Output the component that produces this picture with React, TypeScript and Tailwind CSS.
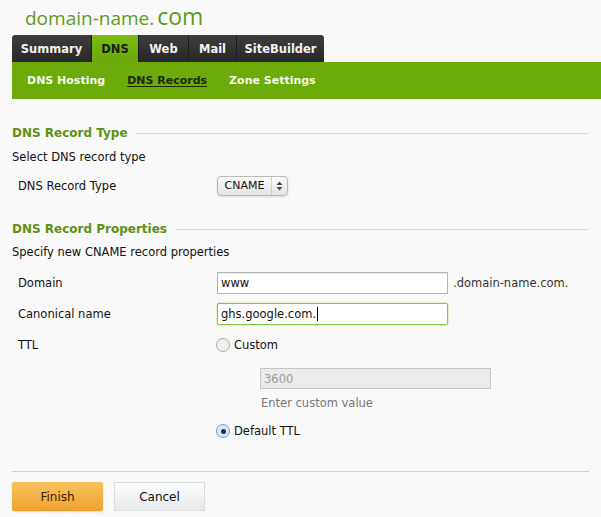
import { useState } from "react";

const tabs = [
  { label: "Summary", w: "w-[79px]" },
  { label: "DNS", w: "w-[46px]" },
  { label: "Web", w: "w-[49px]" },
  { label: "Mail", w: "w-[47px]" },
  { label: "SiteBuilder", w: "w-[87px]" },
];
const subNav = ["DNS Hosting", "DNS Records", "Zone Settings"];

function SectionTitle({ children }: { children: string }) {
  return (
    <div className="flex h-[18px] items-center gap-[8px]">
      <span className="whitespace-nowrap text-[12px] font-bold text-[#5b9114]">{children}</span>
      <div className="h-px flex-1 bg-[#dadada]" />
    </div>
  );
}

function Radio({ checked }: { checked: boolean }) {
  return (
    <span
      className={`flex h-[14px] w-[14px] items-center justify-center rounded-full border ${
        checked ? "border-[#6b9fd6] bg-[#dbe9f8]" : "border-[#a8a8a8] bg-[#f0f0f0]"
      }`}
    >
      {checked && <span className="h-[5px] w-[5px] rounded-full bg-[#1d2f45]" />}
    </span>
  );
}

export default function App() {
  const [ttl, setTtl] = useState<"custom" | "default">("default");

  return (
    <div
      className="h-[517px] w-[601px] overflow-hidden bg-[#f9f9f9] text-[11.5px] leading-[18px] text-[#111]"
      style={{ fontFamily: '"DejaVu Sans", Verdana, sans-serif' }}
    >
      <div
        className="flex h-[35px] items-baseline pl-[25px] pt-[1px] leading-[30px] text-[#5e9a1c]"
        style={{ fontFamily: '"Open Sans", sans-serif' }}
      >
        <span className="text-[19px]">domain-name.</span>
        <span className="ml-[3px] text-[23px] font-medium">com</span>
      </div>

      <div className="flex pl-[12px]">
        <div className="flex h-[27px] gap-[1px] overflow-hidden rounded-t-[4px] bg-[#1e1e1e]">
          {tabs.map((t) => (
            <div
              key={t.label}
              className={`flex items-center justify-center text-[11.5px] font-bold ${t.w} ${
                t.label === "DNS"
                  ? "bg-gradient-to-b from-[#7cbb12] to-[#6aa80a] text-[#1b1b1b]"
                  : "bg-gradient-to-b from-[#3e3e3e] to-[#282828] text-[#f2f2f2]"
              }`}
            >
              {t.label}
            </div>
          ))}
        </div>
      </div>

      <div className="ml-[12px] flex h-[37px] items-center gap-[22px] bg-[#6dab0b] pl-[15px]">
        {subNav.map((s) => (
          <span
            key={s}
            className={`text-[11px] font-bold ${
              s === "DNS Records" ? "text-[#1c2a0a] underline underline-offset-2" : "text-[#f4f7ea]"
            }`}
          >
            {s}
          </span>
        ))}
      </div>

      <div className="px-[12px] pt-[25px]">
        <SectionTitle>DNS Record Type</SectionTitle>
        <div className="mt-[6px]">Select DNS record type</div>
        <div className="mt-[10px] flex h-[20px] items-center">
          <span className="w-[205px] pl-[6px]">DNS Record Type</span>
          <div className="flex h-[20px] w-[71px] items-center rounded-[4px] border border-[#b8b8b8] bg-gradient-to-b from-[#fbfbfb] to-[#e3e3e3] shadow-sm">
            <span className="flex-1 text-center text-[11px]">CNAME</span>
            <span className="flex h-full w-[16px] items-center justify-center border-l border-[#cfcfcf]">
              <svg width="7" height="10" viewBox="0 0 7 10">
                <path d="M3.5 0.5 L6.5 4 H0.5 Z M3.5 9.5 L6.5 6 H0.5 Z" fill="#444" />
              </svg>
            </span>
          </div>
        </div>

        <div className="mt-[24px]">
          <SectionTitle>DNS Record Properties</SectionTitle>
        </div>
        <div className="mt-[5px]">Specify new CNAME record properties</div>

        <div className="mt-[11px] flex h-[22px] items-center">
          <span className="w-[205px] pl-[6px]">Domain</span>
          <div className="flex h-[22px] w-[231px] items-center border border-[#b5b5b5] bg-white px-[3px] shadow-[inset_0_1px_1px_rgba(0,0,0,0.08)]">
            www
          </div>
          <span className="ml-[5px] text-[#333]">.domain-name.com.</span>
        </div>

        <div className="mt-[9px] flex h-[22px] items-center">
          <span className="w-[205px] pl-[6px]">Canonical name</span>
          <div className="flex h-[22px] w-[231px] items-center rounded-[2px] border border-[#89c34a] bg-white px-[3px] shadow-[0_0_2px_#a6d66a]">
            ghs.google.com.
            <span className="ml-[1px] h-[14px] w-px bg-black" />
          </div>
        </div>

        <div className="mt-[11px] flex h-[18px] items-center">
          <span className="w-[204px] pl-[6px]">TTL</span>
          <button className="flex items-center gap-[4px]" onClick={() => setTtl("custom")}>
            <Radio checked={ttl === "custom"} />
            <span>Custom</span>
          </button>
        </div>

        <div className="ml-[248px] mt-[14px]">
          <div className="flex h-[21px] w-[231px] items-center border border-[#c4c4c4] bg-[#ebebeb] px-[3px] text-[#9a9a9a]">
            3600
          </div>
          <div className="mt-[5px] pl-[1px] text-[#777]">Enter custom value</div>
        </div>

        <div className="mt-[10px] flex h-[18px] items-center pl-[204px]">
          <button className="flex items-center gap-[4px]" onClick={() => setTtl("default")}>
            <Radio checked={ttl === "default"} />
            <span>Default TTL</span>
          </button>
        </div>

        <div className="mt-[31px] h-px bg-[#cfcfcf]" />

        <div className="mt-[10px] flex gap-[11px]">
          <button className="h-[29px] w-[91px] rounded-[2px] bg-gradient-to-b from-[#f8c25e] to-[#eea22a] text-[12px] text-[#3a2200] shadow-sm">
            Finish
          </button>
          <button className="h-[29px] w-[91px] border border-[#dcdcdc] bg-gradient-to-b from-[#fdfdfd] to-[#e6eaed] text-[12px] text-[#111]">
            Cancel
          </button>
        </div>
      </div>
    </div>
  );
}
